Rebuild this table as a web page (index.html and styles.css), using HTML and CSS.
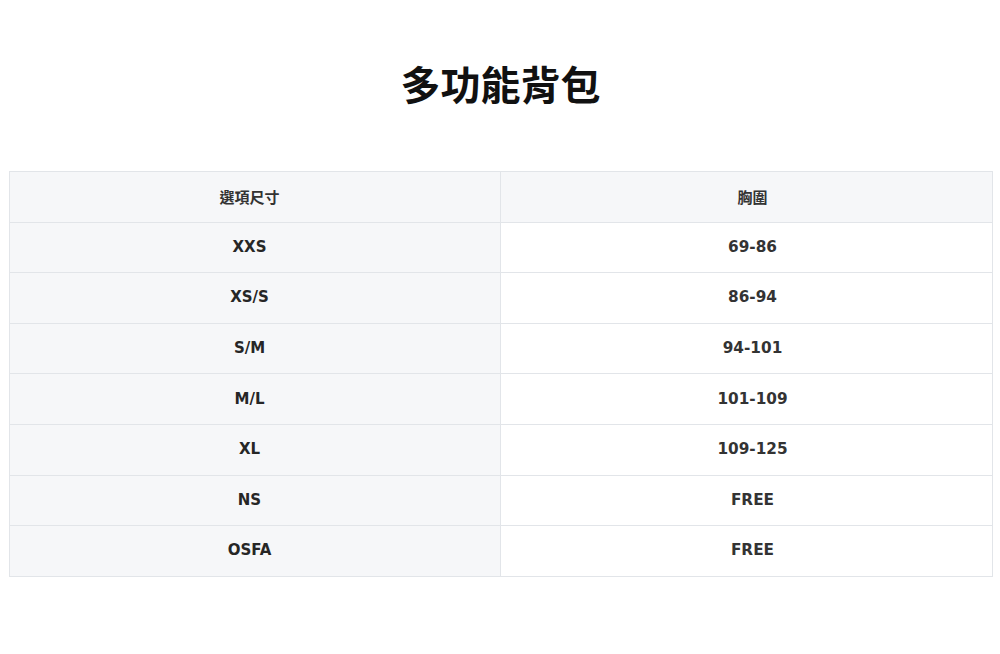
FILE: index.html
```html
<!DOCTYPE html>
<html lang="zh-Hant">
<head>
<meta charset="utf-8">
<link rel="stylesheet" href="styles.css">
</head>
<body>
<div class="page">
  <h1 class="title">多功能背包</h1>
  <table class="size-table">
    <thead>
      <tr><th class="col-size">選項尺寸</th><th class="col-val">胸圍</th></tr>
    </thead>
    <tbody>
      <tr><td class="col-size">XXS</td><td class="col-val">69-86</td></tr>
      <tr><td class="col-size">XS/S</td><td class="col-val">86-94</td></tr>
      <tr><td class="col-size">S/M</td><td class="col-val">94-101</td></tr>
      <tr><td class="col-size">M/L</td><td class="col-val">101-109</td></tr>
      <tr><td class="col-size">XL</td><td class="col-val">109-125</td></tr>
      <tr><td class="col-size">NS</td><td class="col-val">FREE</td></tr>
      <tr><td class="col-size">OSFA</td><td class="col-val">FREE</td></tr>
    </tbody>
  </table>
</div>
</body>
</html>
```
FILE: styles.css
```css
html, body {
  margin: 0;
  padding: 0;
  background: #ffffff;
}
.page {
  padding: 58px 8px 0 9px;
}
.title {
  margin: 0 0 63px 0;
  text-align: center;
  font-family: "Noto Sans CJK TC", "Noto Sans", sans-serif;
  font-weight: 700;
  font-size: 40px;
  line-height: 50px;
  color: #111111;
}
.size-table {
  width: 984px;
  border-collapse: collapse;
  table-layout: fixed;
}
.size-table th,
.size-table td {
  box-sizing: border-box;
  border: 1px solid #e2e5e9;
  height: 50.6px;
  padding: 0 0 1px 0;
  text-align: center;
  color: #2b2b2b;
}
.size-table th {
  background: #f6f7f9;
  font-family: "Noto Sans CJK TC", "Noto Sans", sans-serif;
  font-weight: 700;
  font-size: 15px;
  color: #333333;
}
.col-size { width: 491px; }
.size-table .col-size {
  padding-right: 11px;
}
.size-table .col-val {
  padding-left: 12px;
}
.size-table td.col-size {
  background: #f6f7f9;
  font-family: "DejaVu Sans", sans-serif;
  font-weight: 700;
  font-size: 15px;
  color: #262626;
}
.size-table td.col-val {
  background: #ffffff;
  font-family: "DejaVu Sans", sans-serif;
  font-weight: 700;
  font-size: 15.3px;
  color: #333333;
}
```
